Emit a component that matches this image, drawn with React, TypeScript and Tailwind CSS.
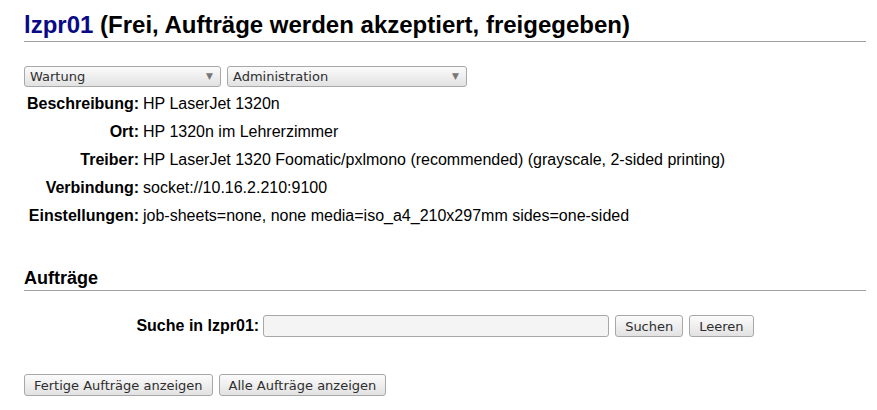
import React from "react";

const rows: [string, string][] = [
  ["Beschreibung:", "HP LaserJet 1320n"],
  ["Ort:", "HP 1320n im Lehrerzimmer"],
  ["Treiber:", "HP LaserJet 1320 Foomatic/pxlmono (recommended) (grayscale, 2-sided printing)"],
  ["Verbindung:", "socket://10.16.2.210:9100"],
  ["Einstellungen:", "job-sheets=none, none media=iso_a4_210x297mm sides=one-sided"],
];

const widget =
  "border border-[#a8a8a8] rounded-[3px] bg-gradient-to-b from-[#fbfbfb] to-[#e2e2e2] text-[13px] text-[#2e2e2e] font-['DejaVu_Sans',sans-serif]";

function FakeSelect({ label, width }: { label: string; width: string }) {
  return (
    <div className={`${widget} ${width} h-[21px] flex items-center justify-between pl-[5px] pr-[7px]`}>
      <span>{label}</span>
      <span className="text-[9px] text-[#777]">▼</span>
    </div>
  );
}

function Btn({ children }: { children: React.ReactNode }) {
  return (
    <button className={`${widget} h-[22px] px-[9px] leading-none`}>{children}</button>
  );
}

export default function App() {
  return (
    <div className="min-h-screen bg-white text-black font-['Liberation_Sans',Arial,sans-serif]">
      <div className="ml-6 w-[842px]">
        <h2 className="pt-[11px] pb-[2px] text-[24px] leading-[28px] font-bold border-b border-[#a0a0a0]">
          <span className="text-[#0a0a86]">lzpr01</span> (Frei, Aufträge werden akzeptiert, freigegeben)
        </h2>

        <div className="mt-[24px] flex gap-[6px]">
          <FakeSelect label="Wartung" width="w-[197px]" />
          <FakeSelect label="Administration" width="w-[240px]" />
        </div>

        <div className="mt-[3px] flex flex-col text-[16px] leading-[28px]">
          {rows.map(([k, v]) => (
            <div key={k} className="flex">
              <div className="w-[115px] text-right font-bold">{k}</div>
              <div className="pl-[4px]">{v}</div>
            </div>
          ))}
        </div>

        <h3 className="mt-[36px] text-[18px] leading-[24px] font-bold border-b border-[#a0a0a0]">Aufträge</h3>

        <div className="mt-[23px] flex items-center justify-center">
          <span className="text-[16px] font-bold mr-[4px]">Suche in lzpr01:</span>
          <div className="w-[346px] h-[22px] border border-[#a8a8a8] rounded-[3px] bg-[#f4f4f4]" />
          <div className="ml-[6px] flex gap-[6px]">
            <Btn>Suchen</Btn>
            <Btn>Leeren</Btn>
          </div>
        </div>

        <div className="mt-[36px] flex gap-[6px]">
          <Btn>Fertige Aufträge anzeigen</Btn>
          <Btn>Alle Aufträge anzeigen</Btn>
        </div>
      </div>
    </div>
  );
}
